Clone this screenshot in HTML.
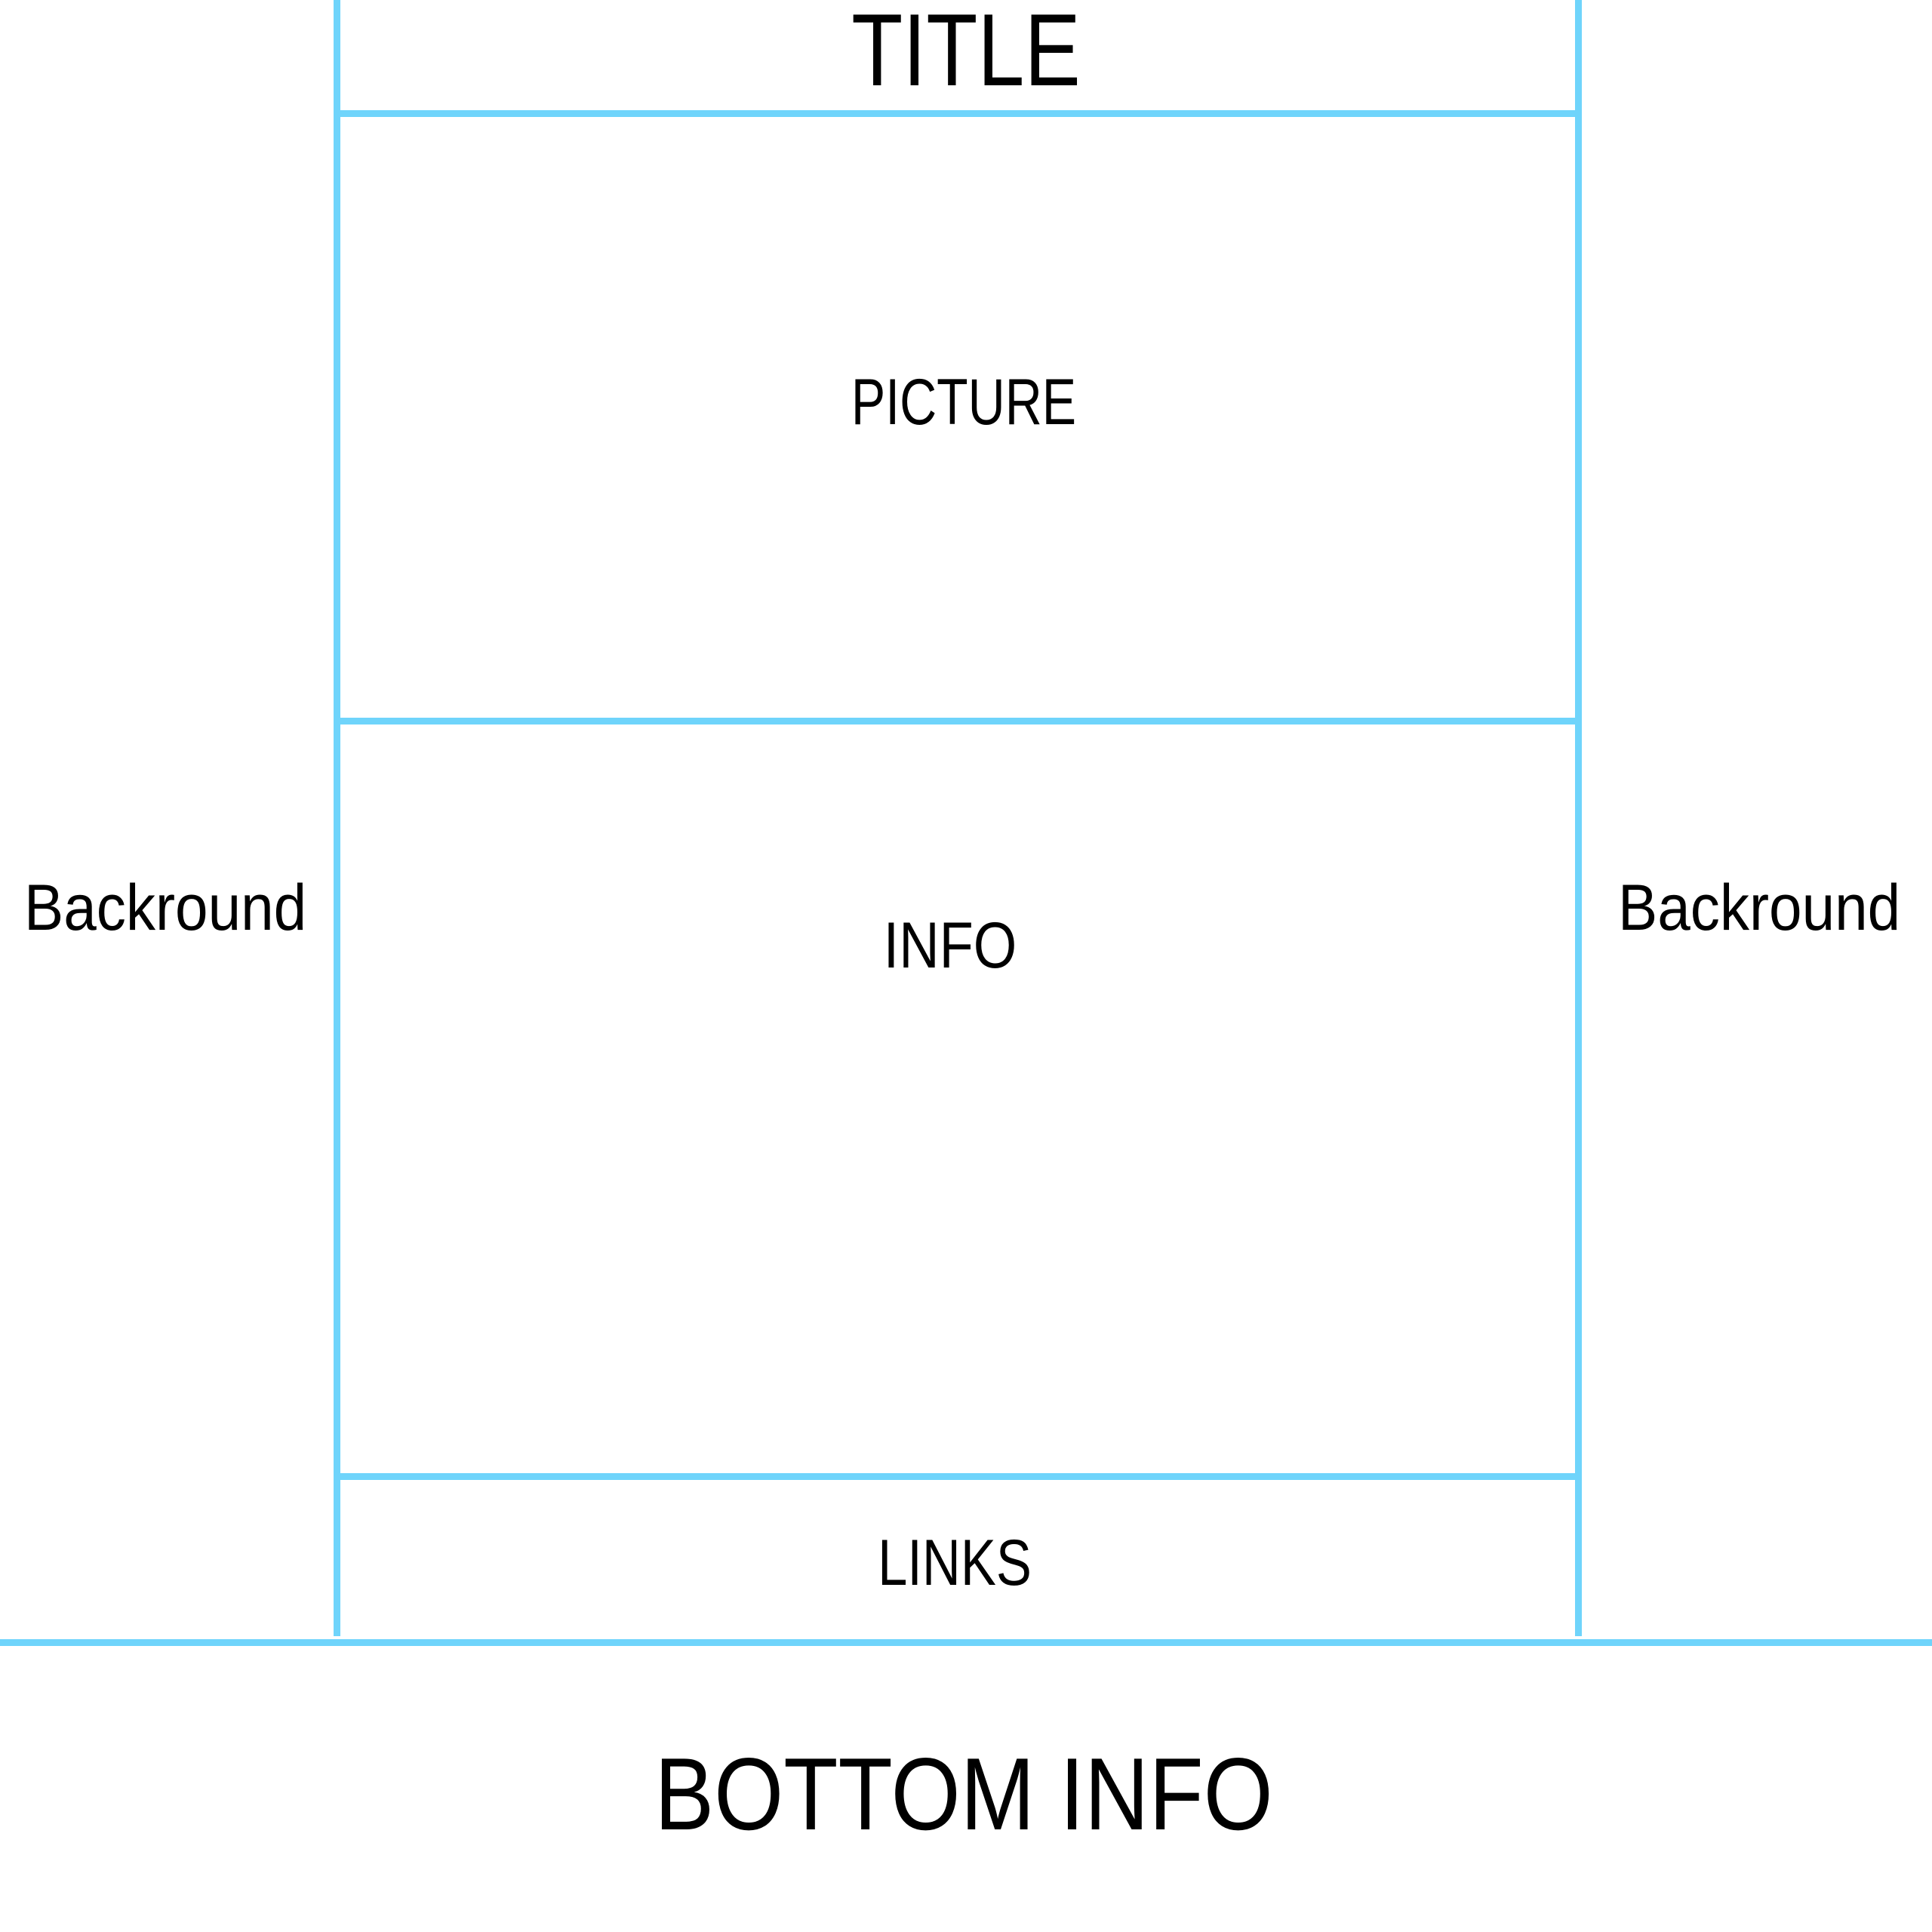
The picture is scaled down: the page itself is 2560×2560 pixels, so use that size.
<!DOCTYPE html>
<html><head><meta charset="utf-8"><style>
html,body{margin:0;padding:0;background:#fff;}
body{width:2560px;height:2560px;position:relative;overflow:hidden;font-family:"Liberation Sans",sans-serif;color:#000;}
.l{position:absolute;background:#6fd4fb;}
.t{position:absolute;line-height:1;white-space:nowrap;text-align:center;}
</style></head><body>
<div class="l" style="left:442px;top:0;width:9px;height:2168px"></div>
<div class="l" style="left:2087px;top:0;width:9px;height:2168px"></div>
<div class="l" style="left:447px;top:146px;width:1645px;height:9px"></div>
<div class="l" style="left:447px;top:951px;width:1645px;height:9px"></div>
<div class="l" style="left:447px;top:1952px;width:1645px;height:9px"></div>
<div class="l" style="left:0;top:2172px;width:2560px;height:9px"></div>

<div class="t" style="left:780px;width:1000px;top:-2px;font-size:136px;transform:scaleX(0.82)">TITLE</div>
<div class="t" style="left:777px;width:1000px;top:490px;font-size:86px;transform:scaleX(0.79)">PICTURE</div>
<div class="t" style="left:759px;width:1000px;top:1210px;font-size:86px;transform:scaleX(0.86)">INFO</div>
<div class="t" style="left:765px;width:1000px;top:2028px;font-size:86px;transform:scaleX(0.82)">LINKS</div>
<div class="t" style="left:14px;width:400px;top:1160px;font-size:86px;transform:scaleX(0.91)">Backround</div>
<div class="t" style="left:2126px;width:400px;top:1160px;font-size:86px;transform:scaleX(0.91)">Backround</div>
<div class="t" style="left:777px;width:1000px;top:2309px;font-size:136px;transform:scaleX(0.87)">BOTTOM INFO</div>
</body></html>
